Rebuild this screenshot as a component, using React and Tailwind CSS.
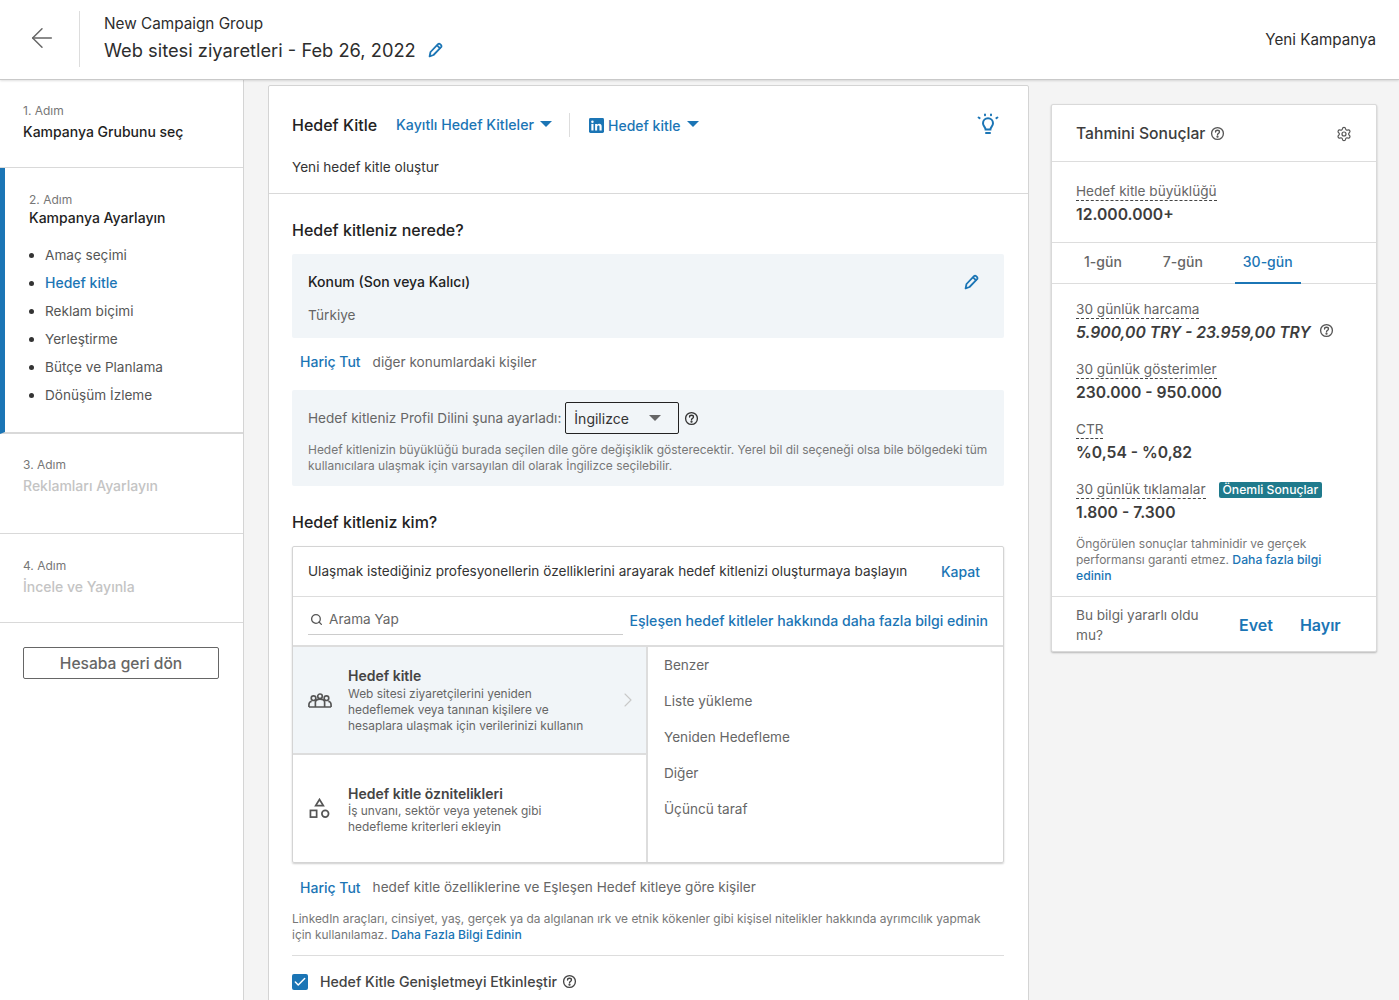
import React from 'react';
import { ArrowLeft, Search, ChevronRight, Check, Settings } from 'lucide-react';

const Help = ({ className = '' }) => (
  <svg viewBox="0 0 16 16" className={className} fill="none" stroke="currentColor" strokeWidth="1.4">
    <circle cx="8" cy="8" r="6.3" />
    <path d="M5.9 6.4c0-1.2 1-1.9 2.1-1.9s2.1.7 2.1 1.8c0 1.6-2.1 1.5-2.1 3" strokeLinecap="round" />
    <circle cx="8" cy="11.4" r=".5" fill="currentColor" />
  </svg>
);

const Pencil = ({ className = '' }) => (
  <svg viewBox="0 0 16 16" className={className} fill="none" stroke="currentColor" strokeWidth="1.8" strokeLinejoin="round">
    <path d="M1.600 14.400l.9-4.400 7.500-7.800c.6-.6 1.500-.6 2.100 0l1 1c.5.5.5 1.500 0 2l-7.600 7.800-3.900 1.400z" />
    <path d="M9 3.400l3.400 3.300" />
  </svg>
);

const Caret = ({ className = '' }) => <span className={`w-0 h-0 border-l-[6px] border-r-[6px] border-t-[6px] border-l-transparent border-r-transparent ${className}`} />;

const steps = ['Amaç seçimi', 'Hedef kitle', 'Reklam biçimi', 'Yerleştirme', 'Bütçe ve Planlama', 'Dönüşüm İzleme'];
const listItems = ['Benzer', 'Liste yükleme', 'Yeniden Hedefleme', 'Diğer', 'Üçüncü taraf'];

function Metric({ label, value, italic, help, badge, className = '' }) {
  return (
    <div className={className}>
      <div className="flex items-center h-[20px]">
        <span className="text-[13.6px] leading-[18px] text-[#666] border-b border-dashed border-[#444]">{label}</span>
        {badge && <span className="ml-[13px] mt-[1px] px-[4px] h-[16px] leading-[16px] rounded-[2px] bg-[#1f7a8c] text-white text-[12.2px] font-medium">{badge}</span>}
      </div>
      <div className="flex items-center h-[24px] mt-[2px]">
        <span className={`text-[15.7px] font-semibold text-[#3d3d3d] ${italic ? 'italic' : ''}`}>{value}</span>
        {help && <Help className="w-[15px] h-[15px] ml-2 mb-[6px] text-[#555]" />}
      </div>
    </div>
  );
}

export default function App() {
  return (
    <div className="h-screen overflow-hidden flex flex-col bg-[#f4f4f4] text-[#333] font-['Inter',sans-serif]">
      <header className="h-[80px] shrink-0 bg-white border-b border-[#c9c9c9] shadow-[0_1px_2px_rgba(0,0,0,0.12)] flex items-center pr-[23px] relative z-10">
        <div className="w-[80px] h-[56px] -mt-[1px] border-r border-[#ddd] flex items-center justify-center pl-[4px]">
          <ArrowLeft className="w-[32px] h-[32px] -mt-[3px] text-[#666]" strokeWidth={1.1} />
        </div>
        <div className="ml-[24px] flex-1 -mt-[4px]">
          <div className="text-[15.3px] leading-[24px] text-[#2d2d2d]">New Campaign Group</div>
          <div className="flex items-center">
            <span className="text-[18.3px] leading-[28px] text-[#2d2d2d]">Web sitesi ziyaretleri - Feb 26, 2022</span>
            <Pencil className="w-[16px] h-[16px] ml-[12px] text-[#1b75b5]" />
          </div>
        </div>
        <span className="text-[15.2px] pt-[1px] text-[#2d2d2d]">Yeni Kampanya</span>
      </header>

      <div className="flex flex-1 min-h-0">
        <aside className="w-[244px] shrink-0 bg-white border-r border-[#d4d4d4]">
          <div className="h-[88px] pl-[23px] pt-[22px] border-b border-[#d9d9d9]">
            <div className="text-[12px] leading-[18px] text-[#777]">1. Adım</div>
            <div className="text-[14px] leading-[20px] mt-[2px] font-medium text-[#1f1f1f]">Kampanya Grubunu seç</div>
          </div>
          <div className="h-[266px] border-l-[5px] border-[#1b75b5] border-b-2 border-b-[#d9d9d9] pl-[24px] pt-[23px]">
            <div className="text-[12px] leading-[18px] text-[#777]">2. Adım</div>
            <div className="text-[14px] leading-[20px] -mt-[1px] font-medium text-[#1f1f1f]">Kampanya Ayarlayın</div>
            <ul className="mt-[13px]">
              {steps.map((s, i) => (
                <li key={s} className="h-[28px] flex items-center">
                  <span className="w-[5px] h-[5px] rounded-full bg-[#333] mr-[11px]" />
                  <span className={i === 1 ? 'text-[14px] -mt-[1px] text-[#1b75b5] font-medium' : 'text-[13.6px] text-[#555]'}>{s}</span>
                </li>
              ))}
            </ul>
          </div>
          <div className="h-[100px] pl-[23px] pt-[22px] border-b border-[#d9d9d9]">
            <div className="text-[12px] leading-[18px] text-[#777]">3. Adım</div>
            <div className="text-[14px] leading-[20px] mt-[2px] font-medium text-[#c4c4c4]">Reklamları Ayarlayın</div>
          </div>
          <div className="h-[89px] pl-[23px] pt-[23px] border-b border-[#d9d9d9]">
            <div className="text-[12px] leading-[18px] text-[#777]">4. Adım</div>
            <div className="text-[14px] leading-[20px] mt-[2px] font-medium text-[#c4c4c4]">İncele ve Yayınla</div>
          </div>
          <div className="mt-[24px] ml-[23px] w-[196px] h-[32px] pt-[1px] border border-[#666] rounded-[2px] flex items-center justify-center text-[15.6px] font-medium text-[#666]">
            Hesaba geri dön
          </div>
        </aside>

        <main className="w-[761px] ml-[24px] mt-[5px] shrink-0 bg-white border border-[#d4d4d4] rounded-t-[2px] h-[1000px]">
          <div className="h-[108px] border-b border-[#d9d9d9] pl-[23px] pr-[24px] pt-[19px]">
            <div className="flex items-center h-[40px]">
              <span className="text-[16px] font-medium text-[#222]">Hedef Kitle</span>
              <span className="ml-[19px] text-[14.2px] font-medium text-[#1b75b5]">Kayıtlı Hedef Kitleler</span>
              <Caret className="ml-[6px] border-t-[#1b75b5] -mt-[2px]" />
              <span className="ml-[17px] h-[24px] w-px bg-[#ddd]" />
              <svg viewBox="0 0 16 16" className="w-[15px] h-[15px] ml-[19px]">
                <rect width="16" height="16" rx="1.5" fill="#1b75b5" />
                <rect x="2.5" y="6.3" width="2.3" height="7" fill="#fff" />
                <circle cx="3.65" cy="3.9" r="1.35" fill="#fff" />
                <path d="M6.5 6.3h2.2v1c.5-.8 1.3-1.2 2.2-1.2 1.8 0 2.6 1.1 2.6 3v4.2h-2.3V9.5c0-1-.4-1.5-1.2-1.5s-1.3.6-1.3 1.500v3.800H6.500z" fill="#fff" />
              </svg>
              <span className="ml-[4px] text-[14px] font-medium text-[#1b75b5]">Hedef kitle</span>
              <Caret className="ml-[7px] border-t-[#1b75b5] -mt-[2px]" />
              <svg viewBox="0 0 24 24" className="w-[24px] h-[24px] ml-auto mr-[4px] -mt-[2px] text-[#1b75b5]" fill="none" stroke="currentColor" strokeWidth="2" strokeLinecap="round">
                <path d="M9.600 17.500c0-2.200-2.600-3.200-2.600-6.300a5 5 0 0 1 10 0c0 3.100-2.600 4.100-2.600 6.300z" />
                <path d="M10 21h4" />
                <path d="M2.600 5.500l1 .6M21.400 5.500l-1 .6M9 2.500v.8M15 2.500v.8" />
              </svg>
            </div>
            <div className="text-[13.6px] leading-[20px] mt-[12px] text-[#333]">Yeni hedef kitle oluştur</div>
          </div>

          <div className="pl-[23px] pr-[24px] pt-[24px]">
            <h2 className="text-[16px] leading-[24px] font-medium text-[#222]">Hedef kitleniz nerede?</h2>
            <div className="mt-[12px] h-[84px] bg-[#f1f5f8] rounded-[2px] px-[16px] pt-[18px] relative">
              <div className="text-[14px] leading-[20px] font-medium text-[#222]">Konum (Son veya Kalıcı)</div>
              <div className="text-[13.6px] leading-[20px] mt-[13px] text-[#666]">Türkiye</div>
              <Pencil className="absolute right-[24px] top-[20px] w-[16px] h-[16px] text-[#1b75b5]" />
            </div>
            <div className="h-[52px] pl-[8px] pt-[14px] flex items-start leading-[20px]">
              <span className="text-[14px] font-medium text-[#1b75b5]">Hariç Tut</span>
              <span className="ml-[12px] text-[13.6px] text-[#666]">diğer konumlardaki kişiler</span>
            </div>
            <div className="h-[96px] bg-[#f1f5f8] rounded-[2px] pl-[16px] pr-[12px] pt-[12px]">
              <div className="flex items-center text-[13.6px] text-[#666]">
                <span className="pt-[1px]">Hedef kitleniz Profil Dilini şuna ayarladı:</span>
                <span className="ml-[4px] w-[114px] h-[32px] border border-[#222] rounded-[2px] flex items-center px-[8px] text-[14px] text-[#333]">
                  İngilizce
                  <Caret className="ml-auto mr-[9px] border-t-[#666]" />
                </span>
                <Help className="w-[15px] h-[15px] ml-[5px] mt-[1px] text-[#333]" />
              </div>
              <p className="mt-[8px] text-[11.97px] leading-[16px] text-[#777]">
                Hedef kitlenizin büyüklüğü burada seçilen dile göre değişiklik gösterecektir. Yerel bil dil seçeneği olsa bile bölgedeki tüm kullanıcılara ulaşmak için varsayılan dil olarak İngilizce seçilebilir.
              </p>
            </div>
            <h2 className="text-[16px] leading-[24px] font-medium text-[#222] mt-[24px]">Hedef kitleniz kim?</h2>

            <div className="mt-[12px] h-[317px] border border-[#d4d4d4] rounded-[2px] shadow-[0_1px_2px_rgba(0,0,0,0.2)]">
              <div className="h-[50px] border-b border-[#ddd] pl-[15px] pr-[23px] flex items-center justify-between">
                <span className="text-[13.6px] text-[#333]">Ulaşmak istediğiniz profesyonellerin özelliklerini arayarak hedef kitlenizi oluşturmaya başlayın</span>
                <span className="text-[14px] font-medium text-[#1b75b5]">Kapat</span>
              </div>
              <div className="h-[50px] flex pl-[15px] pr-[15px] border-b-2 border-[#ddd]">
                <div className="w-[315px] h-[38px] border-b border-[#ccc] flex items-center pl-[2px] pt-[8px] text-[13.6px] text-[#666]">
                  <Search className="w-[13px] h-[13px] text-[#555]" strokeWidth={2.4} />
                  <span className="ml-[6px]">Arama Yap</span>
                </div>
                <span className="ml-auto pt-[14px] text-[14.08px] leading-[20px] font-medium text-[#1b75b5]">Eşleşen hedef kitleler hakkında daha fazla bilgi edinin</span>
              </div>
              <div className="flex h-[215px]">
                <div className="w-[355px] border-r-2 border-[#ddd]">
                  <div className="h-[108px] bg-[#f1f5f8] border-b-2 border-[#ddd] flex items-center relative">
                    <svg viewBox="0 0 26 16" className="w-[24px] h-[15px] ml-[15px] shrink-0 text-[#555]" fill="none" stroke="currentColor" strokeWidth="1.8">
                      <circle cx="6" cy="5.500" r="2.500" /><circle cx="13" cy="3.500" r="2.500" /><circle cx="20" cy="5.500" r="2.500" />
                      <path d="M1 15v-2.500c0-2 1.500-3.500 3-3.500M25 15v-2.500c0-2-1.500-3.500-3-3.500M8 15v-5c0-2 2-3.500 5-3.500s5 1.500 5 3.500v5M1 15h24" />
                    </svg>
                    <div className="ml-[16px]">
                      <div className="text-[14px] leading-[18px] font-semibold text-[#444]">Hedef kitle</div>
                      <div className="text-[11.92px] leading-[16px] mt-[1px] text-[#666] w-[245px]">Web sitesi ziyaretçilerini yeniden hedeflemek veya tanınan kişilere ve hesaplara ulaşmak için verilerinizi kullanın</div>
                    </div>
                    <ChevronRight className="absolute right-[6px] top-[41px] w-[24px] h-[24px] text-[#c8c8c8]" strokeWidth={1.1} />
                  </div>
                  <div className="h-[107px] flex items-center">
                    <svg viewBox="0 0 22 22" className="w-[21px] h-[21px] ml-[16px] shrink-0 text-[#555]" fill="none" stroke="currentColor" strokeWidth="1.8">
                      <path d="M11 1.500l4 6.500H7z" />
                      <rect x="1.500" y="13" width="6.500" height="7" />
                      <circle cx="17" cy="16.500" r="3.500" />
                    </svg>
                    <div className="ml-[18px] pt-[1px]">
                      <div className="text-[14px] leading-[19px] font-semibold text-[#444]">Hedef kitle öznitelikleri</div>
                      <div className="text-[11.92px] leading-[16px] text-[#666] w-[230px]">İş unvanı, sektör veya yetenek gibi hedefleme kriterleri ekleyin</div>
                    </div>
                  </div>
                </div>
                <div className="flex-1 pl-[16px]">
                  {listItems.map((l) => (
                    <div key={l} className="h-[36px] flex items-center text-[13.6px] text-[#666]">{l}</div>
                  ))}
                </div>
              </div>
            </div>

            <div className="h-[48px] pl-[8px] flex items-center">
              <span className="text-[14px] font-medium text-[#1b75b5]">Hariç Tut</span>
              <span className="ml-[12px] text-[13.6px] text-[#666]">hedef kitle özelliklerine ve Eşleşen Hedef kitleye göre kişiler</span>
            </div>
            <p className="text-[11.92px] leading-[16px] text-[#777] pr-[10px]">
              LinkedIn araçları, cinsiyet, yaş, gerçek ya da algılanan ırk ve etnik kökenler gibi kişisel nitelikler hakkında ayrımcılık yapmak için kullanılamaz. <span className="text-[12.2px] font-medium text-[#1b75b5]">Daha Fazla Bilgi Edinin</span>
            </p>
            <div className="mt-[12px] border-t border-[#ddd] pt-[15px] flex items-center">
              <span className="w-[16px] h-[16px] bg-[#1b75b5] rounded-[2px] flex items-center justify-center">
                <Check className="w-[14px] h-[14px] text-white" strokeWidth={2.5} />
              </span>
              <span className="ml-[12px] text-[14.15px] font-medium text-[#444]">Hedef Kitle Genişletmeyi Etkinleştir</span>
              <Help className="w-[15px] h-[15px] ml-[5px] text-[#444]" />
            </div>
          </div>
        </main>

        <section className="w-[326px] ml-[22px] mt-[24px] self-start bg-white border border-[#d9d9d9] rounded-[2px] shadow-[0_1px_2px_rgba(0,0,0,0.25)]">
          <div className="h-[57px] border-b border-[#ddd] pl-[24px] pr-[24px] pt-[1px] flex items-center">
            <span className="text-[15.7px] font-medium text-[#3d3d3d]">Tahmini Sonuçlar</span>
            <Help className="w-[15px] h-[15px] ml-[5px] text-[#555]" />
            <Settings className="w-[16px] h-[16px] ml-auto text-[#555]" strokeWidth={1.8} />
          </div>
          <div className="h-[81px] border-b border-[#ddd] pl-[24px] pt-[19px]">
            <Metric label="Hedef kitle büyüklüğü" value="12.000.000+" />
          </div>
          <div className="h-[41px] border-b border-[#ddd] pl-[24px] flex text-[14px] font-medium text-[#666]">
            <span className="w-[8px]" />
            <span className="pt-[8px]">1-gün</span>
            <span className="ml-[41px] pt-[8px]">7-gün</span>
            <span className="ml-[32px] px-[8px] pt-[8px] h-[41px] border-b-2 border-[#1b75b5] text-[#1b75b5]">30-gün</span>
          </div>
          <div className="pl-[24px] pr-[22px] pt-[15px]">
            <Metric label="30 günlük harcama" value="5.900,00 TRY - 23.959,00 TRY" italic help />
            <Metric label="30 günlük gösterimler" value="230.000 - 950.000" className="mt-[14px]" />
            <Metric label="CTR" value="%0,54 - %0,82" className="mt-[14px]" />
            <Metric label="30 günlük tıklamalar" value="1.800 - 7.300" badge="Önemli Sonuçlar" className="mt-[14px]" />
            <p className="mt-[11px] text-[12px] leading-[16px] text-[#777]">
              Öngörülen sonuçlar tahminidir ve gerçek performansı garanti etmez. <span className="text-[12.2px] font-medium text-[#1b75b5]">Daha fazla bilgi edinin</span>
            </p>
          </div>
          <div className="mt-[12px] h-[55px] border-t border-[#ddd] pl-[24px] pt-[2px] flex items-center">
            <span className="w-[130px] text-[13.6px] leading-[20px] text-[#666]">Bu bilgi yararlı oldu mu?</span>
            <span className="ml-[33px] text-[16px] font-semibold text-[#1b75b5]">Evet</span>
            <span className="ml-[27px] text-[16px] font-semibold text-[#1b75b5]">Hayır</span>
          </div>
        </section>
      </div>
    </div>
  );
}
